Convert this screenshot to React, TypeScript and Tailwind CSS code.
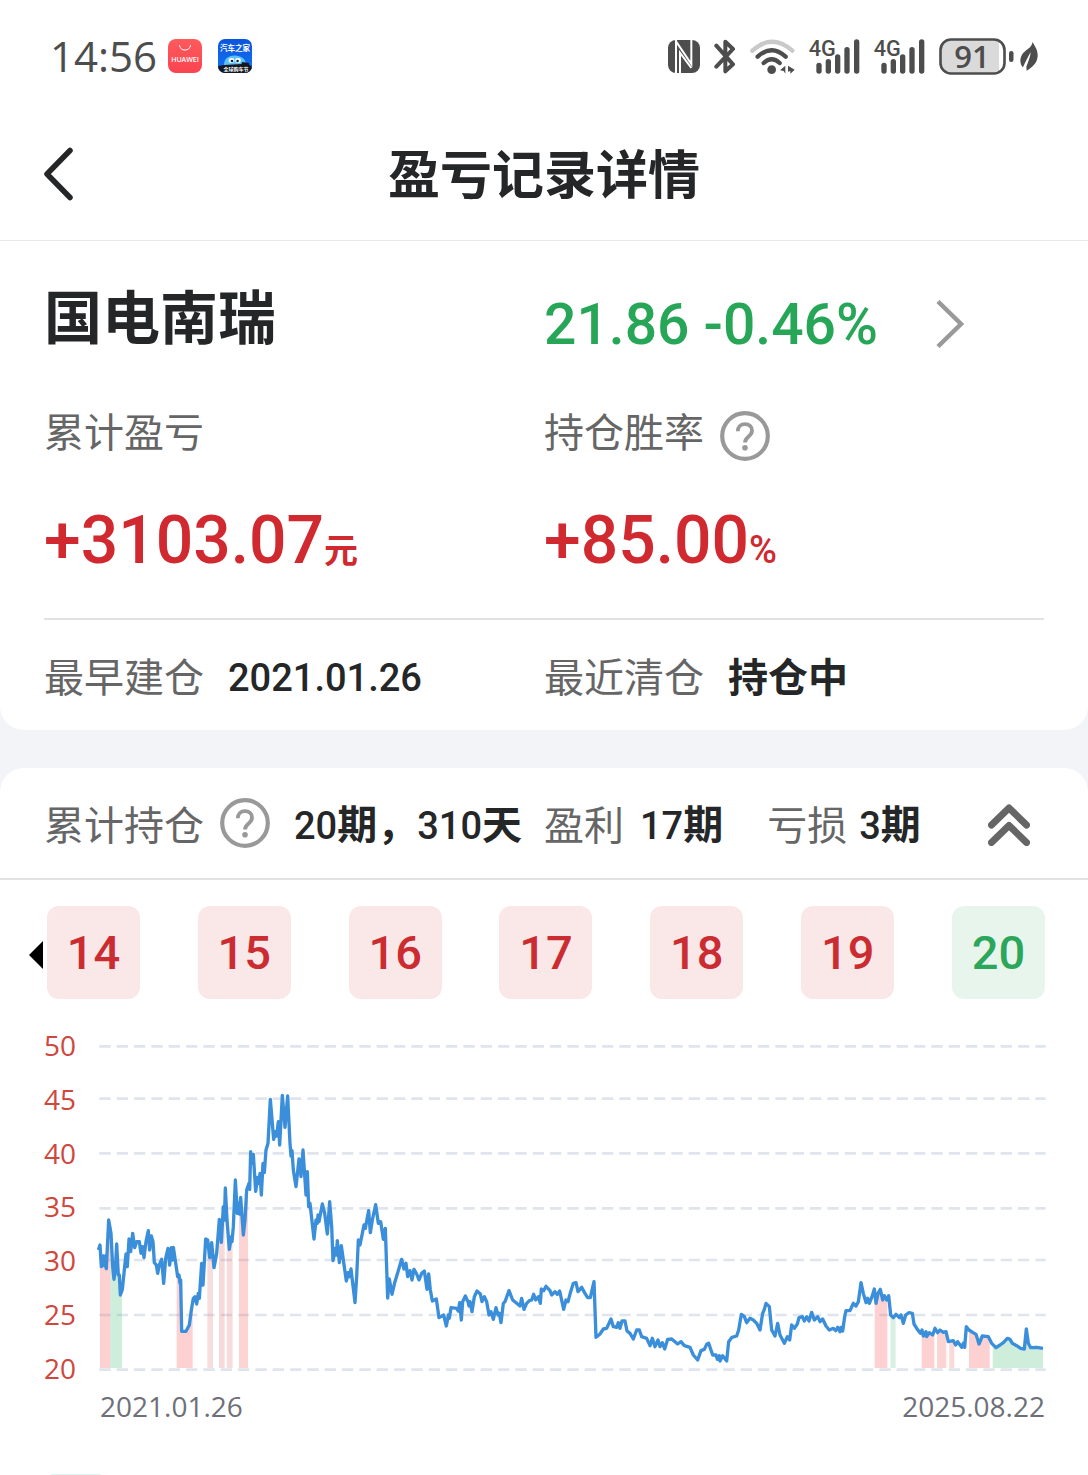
import React from "react";

const PRICE_LINE =
  "4,657 9,642 13,707 19,675 23,705 25,675 28,713 35,567 42,607 47,707 51,745 55,717 59,639 64,732 67,732 70,792 76,775 82,717 87,669 91,707 96,624 101,662 107,607 113,650 119,632 127,632 132,667 137,647 141,680 147,632 154,599 158,657 163,615 168,632 172,695 178,702 182,727 187,702 194,685 200,757 206,682 213,652 218,702 223,650 226,687 229,649 235,689 242,737 246,732 249,757 251,747 254,901 267,901 277,882 283,837 289,802 294,797 299,819 304,787 307,802 314,697 318,762 326,624 332,627 338,680 344,635 351,710 359,667 367,565 373,634 379,527 382,567 385,471 390,567 397,655 403,617 405,632 409,587 415,447 421,547 425,517 427,549 431,499 439,612 444,567 449,477 456,457 458,475 461,362 465,397 469,370 476,481 482,439 486,457 489,427 493,492 498,397 502,425 507,357 513,337 520,205 530,325 535,302 539,315 544,272 548,342 556,193 " +
  "564,289 572,195 579,337 582,375 585,359 589,417 597,467 606,384 612,437 618,357 627,492 631,422 635,527 639,517 651,624 657,567 661,577 663,552 666,572 676,519 683,547 691,609 698,512 704,587 708,689 715,652 718,672 721,629 727,695 733,644 739,687 748,750 753,725 757,737 762,714 774,815 779,737 784,627 789,642 795,612 801,582 805,592 815,539 820,605 826,567 836,521 844,577 851,572 859,625 865,592 872,801 877,744 885,790 893,755 903,722 914,685 921,714 927,697 932,737 939,719 945,747 951,715 959,729 966,747 974,727 982,720 990,775 995,729 1000,777 1006,810 1018,804 1026,860 1040,852 1048,885 1054,852 1057,862 1062,830 1079,832 1084,840 1088,815 1093,867 1097,812 1105,795 1113,812 1116,825 1119,812 1125,842 1132,797 1140,780 1150,789 1155,812 1162,797 1169,812 1176,852 1182,842 1189,865 1197,830 1203,852 1207,847 1212,875 " +
  "1219,817 1224,812 1236,779 1247,807 1259,817 1269,825 1274,802 1281,835 1289,817 1297,809 1304,807 1310,790 1316,807 1324,797 1330,817 1333,774 1340,779 1347,766 1359,779 1364,792 1374,782 1381,790 1388,780 1400,835 1407,807 1413,812 1421,782 1429,757 1437,755 1443,782 1454,769 1464,787 1472,800 1480,800 1491,752 1497,919 1509,909 1519,894 1529,892 1542,864 1549,887 1559,889 1564,875 1569,892 1575,870 1584,870 1590,900 1599,907 1609,924 1619,897 1627,897 1634,917 1649,922 1659,944 1666,922 1674,947 1683,927 1689,947 1696,935 1703,954 1712,925 1724,924 1742,939 1752,932 1762,944 1779,949 1789,972 1802,987 1812,959 1822,955 1829,940 1835,937 1847,972 1857,972 1861,985 1867,974 1869,990 1877,974 1889,990 1895,932 1905,919 1919,915 1925,897 1933,850 1942,857 1949,875 1959,862 1969,867 1979,877 1989,897 1997,847 2002,835 2007,817 2017,827 " +
  "2024,897 2034,915 2042,877 2049,912 2062,937 2071,917 2078,927 2084,882 2092,892 2101,879 2106,860 2116,857 2122,870 2129,857 2136,870 2144,844 2152,867 2162,857 2169,872 2177,864 2187,885 2197,897 2209,892 2216,899 2222,889 2229,902 2232,889 2237,900 2243,857 2247,839 2259,839 2269,817 2277,825 2284,812 2292,755 2299,787 2307,815 2312,802 2317,817 2325,797 2332,774 2337,817 2343,787 2350,775 2357,807 2362,794 2369,807 2375,794 2381,852 2389,860 2397,850 2407,860 2412,852 2419,877 2426,852 2436,845 2446,847 2451,879 2461,895 2471,907 2475,897 2479,915 2487,902 2489,917 2497,905 2507,912 2514,892 2522,905 2529,897 2539,904 2547,902 2554,932 2569,929 2576,942 2582,932 2594,949 2599,937 2603,949 2608,887 2616,897 2627,904 2637,910 2646,939 2656,915 2674,917 2684,937 2697,950 2709,942 2719,935 2731,922 2739,925 2746,937 2759,944 2771,952 2782,954 2788,894 2794,937 2801,950 2819,949 2838,952";

const GRID_LINES = [46, 203, 367, 532, 687, 852, 1016];

const BANDS = [
  { from: 9, to: 40, color: "#f87171", opacity: 0.32 },
  { from: 40, to: 75, color: "#4fbf7f", opacity: 0.28 },
  { from: 239, to: 287, color: "#f87171", opacity: 0.32 },
  { from: 331, to: 348, color: "#e08080", opacity: 0.26 },
  { from: 366, to: 383, color: "#e08080", opacity: 0.3 },
  { from: 389, to: 407, color: "#e08080", opacity: 0.28 },
  { from: 426, to: 453, color: "#f87171", opacity: 0.3 },
  { from: 2333, to: 2371, color: "#f87171", opacity: 0.32 },
  { from: 2380, to: 2396, color: "#4fbf7f", opacity: 0.22 },
  { from: 2474, to: 2512, color: "#f87171", opacity: 0.32 },
  { from: 2520, to: 2548, color: "#f87171", opacity: 0.3 },
  { from: 2557, to: 2572, color: "#e87878", opacity: 0.28 },
  { from: 2616, to: 2678, color: "#f87171", opacity: 0.32 },
  { from: 2687, to: 2838, color: "#4fbf7f", opacity: 0.28 },
];

const PERIODS = [
  { n: 14, profit: true },
  { n: 15, profit: true },
  { n: 16, profit: true },
  { n: 17, profit: true },
  { n: 18, profit: true },
  { n: 19, profit: true },
  { n: 20, profit: false },
];

function Num({ children }: { children: React.ReactNode }) {
  return <span className="font-[Roboto] text-[38px] font-medium">{children}</span>;
}

function HelpButton({ label }: { label: string }) {
  return (
    <button type="button" aria-label={label} className="shrink-0">
      <svg viewBox="0 0 50 50" className="size-[50px]" fill="none" stroke="#999999">
        <circle cx="25" cy="25" r="22.8" strokeWidth="4.2" />
        <path d="M17.8 20.3c0-4.4 3-7.2 7.2-7.2s7 2.700 7 6.500c0 3-1.500 4.400-3.600 6.100-2.300 1.800-3.400 2.900-3.400 5.800" strokeWidth="3.800" />
        <circle cx="25" cy="36.800" r="2.800" fill="#999999" stroke="none" />
      </svg>
    </button>
  );
}

function Signal() {
  return (
    <svg viewBox="0 0 153 105" className="h-[35px] w-[51px] overflow-visible" fill="#4d4d4d">
      <text x="-1" y="51" fontFamily="Roboto" fontWeight="500" fontSize="65">4G</text>
      <rect x="22" y="71" width="16" height="33" rx="8" />
      <rect x="50" y="60" width="16" height="44" rx="8" />
      <rect x="78" y="46" width="16" height="58" rx="8" />
      <rect x="106" y="24" width="16" height="80" rx="8" />
      <rect x="135" y="1" width="16" height="103" rx="8" />
    </svg>
  );
}

function StatusBar() {
  return (
    <div className="flex h-28 items-center justify-between px-[50px] text-[#4d4d4d]">
      <div className="flex items-center">
        <span className="font-['Open_Sans'] text-[42px] leading-none font-medium">14:56</span>
        <svg viewBox="0 0 34 34" className="ml-[11px] size-[34px]">
          <defs>
            <linearGradient id="store" x1="0" y1="0" x2="0" y2="1">
              <stop offset="0" stopColor="#fd5a5c" />
              <stop offset="1" stopColor="#fa4450" />
            </linearGradient>
          </defs>
          <rect width="34" height="34" rx="8" fill="url(#store)" />
          <path d="M11.500 6.500a5.600 5.600 0 0 0 11 0" fill="none" stroke="#fff" strokeWidth="1" strokeLinecap="round" />
          <text x="17" y="22.500" textAnchor="middle" fontFamily="Open Sans" fontWeight="600" fontSize="7" fill="#fff">HUAWEI</text>
        </svg>
        <svg viewBox="0 0 34 34" className="ml-4 size-[34px]">
          <defs>
            <clipPath id="autoClip"><rect width="34" height="34" rx="7" /></clipPath>
            <linearGradient id="auto" x1="0" y1="0" x2="0" y2="1">
              <stop offset="0" stopColor="#0a55dc" />
              <stop offset="1" stopColor="#1673f2" />
            </linearGradient>
          </defs>
          <g clipPath="url(#autoClip)">
            <rect width="34" height="34" fill="url(#auto)" />
            <path d="M6 26c0-6 4-9.500 10.500-9.500S28 20 28 26z" fill="#5cc3fa" />
            <ellipse cx="13.500" cy="21.500" rx="2.800" ry="2.400" fill="#fff" />
            <ellipse cx="20" cy="21.500" rx="2.800" ry="2.400" fill="#fff" />
            <circle cx="14" cy="22" r="1.300" fill="#112233" />
            <circle cx="19.600" cy="22" r="1.300" fill="#112233" />
            <path d="M0 27l6-1 18-1 8 1 2 2v6H0z" fill="#14171f" />
            <path d="M24 23l7 1v3h-8z" fill="#14171f" />
            <text x="17" y="11.500" textAnchor="middle" fontFamily="Noto Sans CJK SC" fontWeight="700" fontSize="7.500" fill="#fff">汽车之家</text>
            <text x="18" y="32" textAnchor="middle" fontFamily="Noto Sans CJK SC" fontWeight="700" fontSize="5" fill="#fff">全球购车节</text>
          </g>
        </svg>
      </div>
      <div className="flex items-center">
        <svg viewBox="0 0 96 99" className="h-[33px] w-8">
          <rect width="96" height="99" rx="24" fill="#4d4d4d" />
          <path d="M24 0V99M24 4L70 72V0M36 99V38L70 84" fill="none" stroke="#fff" strokeWidth="6" />
        </svg>
        <svg viewBox="0 0 66 105" className="ml-[14px] h-[35px] w-[22px]" fill="none" stroke="#4d4d4d" strokeWidth="12" strokeLinecap="round" strokeLinejoin="round">
          <path d="M7 20L57 76 34 97V8L57 30 7 83" />
        </svg>
        <svg viewBox="0 0 135 105" className="ml-[14px] h-[35px] w-[45px]" fill="none" strokeWidth="13" strokeLinecap="round">
          <path d="M7 35Q65-18 127 35" stroke="#c9c9c9" />
          <path d="M23 53Q65 14 107 53" stroke="#4d4d4d" />
          <path d="M41 72Q65 50 89 72" stroke="#4d4d4d" />
          <circle cx="65" cy="92" r="13" fill="#4d4d4d" />
          <path d="M90 94L106 80V104L101 96zM114 80L134 92 121 104V96L114 98z" fill="#4d4d4d" />
        </svg>
        <div className="ml-[14px]"><Signal /></div>
        <div className="ml-[14px]"><Signal /></div>
        <svg viewBox="0 0 76 37" className="ml-[14px] h-[37px] w-[76px] overflow-visible">
          <path d="M12 1.500h48V35.500H12a10.500 10.500 0 0 1-10.500-10.500v-13A10.500 10.500 0 0 1 12 1.500z" fill="#dadada" />
          <rect x="1.500" y="1.500" width="64" height="34" rx="10.500" fill="none" stroke="#4d4d4d" strokeWidth="2.600" />
          <rect x="70" y="13" width="4.500" height="11" rx="2.200" fill="#4d4d4d" />
          <text x="33" y="29.500" textAnchor="middle" fontFamily="Open Sans" fontWeight="600" fontSize="31" fill="#4d4d4d">91</text>
        </svg>
        <svg viewBox="0 0 54 87" className="ml-[5px] h-[29px] w-[18px]">
          <path d="M38 0C44 12 54 24 53 42 52 64 36 76 20 86L19 74C24 60 31 46 32 30 24 46 16 58 9 76-1 66-1 50 6 38 14 24 34 20 38 0z" fill="#4d4d4d" />
        </svg>
      </div>
    </div>
  );
}

function Chart() {
  return (
    <figure className="mt-8 pr-[41px] pl-11 font-['Open_Sans'] text-[28px] leading-7">
      <div className="flex">
        <div className="flex w-[53px] shrink-0 flex-col justify-between text-[#d0473e]">
          {[50, 45, 40, 35, 30, 25, 20].map((v) => (
            <span key={v}>{v}</span>
          ))}
        </div>
        <svg viewBox="0 0 2850 1053" className="min-w-0 flex-1" role="img" aria-label="股价走势">
          <defs>
            <clipPath id="underLine">
              <polygon points={`4,1011 ${PRICE_LINE} 2838,1011`} />
            </clipPath>
          </defs>
          {GRID_LINES.map((y) => (
            <path key={y} d={`M7 ${y}H2846`} stroke="#e0e4ed" strokeWidth="8" strokeDasharray="34 18" />
          ))}
          <g clipPath="url(#underLine)">
            {BANDS.map((b) => (
              <rect key={b.from} x={b.from} y="0" width={b.to - b.from} height="1011" fill={b.color} fillOpacity={b.opacity} />
            ))}
          </g>
          <polyline points={PRICE_LINE} fill="none" stroke="#3b8fda" strokeWidth="10" strokeLinejoin="round" />
        </svg>
      </div>
      <figcaption className="mt-[10px] flex justify-between pr-0.5 pl-14 text-[#6e7079]">
        <span>2021.01.26</span>
        <span>2025.08.22</span>
      </figcaption>
    </figure>
  );
}

export default function App() {
  return (
    <div className="bg-[#f3f4f7] font-['Noto_Sans_CJK_SC',sans-serif] text-[#242628]">
      <div className="bg-white">
        <StatusBar />
        <header className="grid h-[129px] grid-cols-[1fr_auto_1fr] items-center border-b border-[#e8e8e8] px-[43px] pb-1">
          <button type="button" aria-label="返回" className="justify-self-start">
            <svg viewBox="0 0 31 54" className="h-[54px] w-[31px]" fill="none" stroke="#242628" strokeWidth="5.500" strokeLinecap="round" strokeLinejoin="round">
              <path d="M27 3.500L4 27 27 50.500" />
            </svg>
          </button>
          <h1 className="pb-1 text-[52px] leading-none font-bold">盈亏记录详情</h1>
        </header>
      </div>

      <section className="rounded-b-3xl bg-white px-11 pt-9">
        <div className="grid h-[90px] grid-cols-2 items-center">
          <h2 className="pb-4 text-[58px] leading-none font-bold">国电南瑞</h2>
          <a href="#quote" className="flex items-center justify-between pt-1 pr-[79px] font-[Roboto] text-[57px] leading-none font-medium text-[#27a657]">
            <span className="whitespace-nowrap">21.86 -0.46%</span>
            <svg viewBox="0 0 30 50" className="h-[50px] w-[30px]" fill="none" stroke="#999999" strokeWidth="4.500">
              <path d="M3 2.500L26 25 3 47.500" />
            </svg>
          </a>
        </div>

        <dl className="grid grid-cols-2">
          <div>
            <dt className="mt-10 flex h-[54px] items-center text-[40px] leading-none text-[#666666]">
              <span className="pb-2">累计盈亏</span>
            </dt>
            <dd className="mt-10 h-20 font-[Roboto] text-[66px] leading-[80px] font-medium whitespace-nowrap text-[#d0292f]">
              +3103.07
              <span className="font-['Noto_Sans_CJK_SC'] text-[34px] leading-none font-bold">元</span>
            </dd>
          </div>
          <div>
            <dt className="mt-10 flex h-[54px] items-center gap-4 text-[40px] leading-none text-[#666666]">
              <span className="pb-2">持仓胜率</span>
              <span className="flex pt-1"><HelpButton label="持仓胜率说明" /></span>
            </dt>
            <dd className="mt-10 h-20 font-[Roboto] text-[66px] leading-[80px] font-medium whitespace-nowrap text-[#d0292f]">
              +85.00
              <span className="text-[38px] leading-none">%</span>
            </dd>
          </div>
        </dl>

        <dl className="mt-[37px] grid h-28 grid-cols-2 items-center border-t-2 border-[#e2e2e2] text-[40px] leading-none">
          <div className="flex items-center gap-6">
            <dt className="text-[#666666]">最早建仓</dt>
            <dd><Num>2021.01.26</Num></dd>
          </div>
          <div className="flex items-center gap-6">
            <dt className="text-[#666666]">最近清仓</dt>
            <dd className="font-bold">持仓中</dd>
          </div>
        </dl>
      </section>

      <section className="mt-[38px] rounded-t-3xl bg-white">
        <div className="grid h-28 grid-cols-2 items-center border-b-2 border-[#e2e2e2] px-11 text-[40px] leading-none whitespace-nowrap">
          <div className="flex items-center">
            <span className="text-[#666666]">累计持仓</span>
            <span className="ml-4 flex"><HelpButton label="累计持仓说明" /></span>
            <span className="ml-6 font-bold"><Num>20</Num>期，<Num>310</Num>天</span>
          </div>
          <div className="flex items-center pr-[14px]">
            <span className="text-[#666666]">盈利</span>
            <span className="ml-4 font-bold"><Num>17</Num>期</span>
            <span className="ml-11 text-[#666666]">亏损</span>
            <span className="ml-3 font-bold"><Num>3</Num>期</span>
            <button type="button" aria-label="收起" className="ml-auto pt-1">
              <svg viewBox="0 0 42 42" className="size-[42px]" fill="none" stroke="#666666" strokeWidth="7" strokeLinecap="round" strokeLinejoin="round">
                <path d="M3.500 21L21 4 38.500 21M3.500 38.500L21 21.500 38.500 38.500" />
              </svg>
            </button>
          </div>
        </div>

        <nav aria-label="持仓期数" className="mt-[26px] flex items-center gap-1 pr-[43px] pl-[29px]">
          <button type="button" aria-label="更早的期数" className="pt-1">
            <svg viewBox="0 0 14 28" className="h-7 w-[14px]">
              <path d="M14 0V28L0 14z" fill="#000" />
            </svg>
          </button>
          <div className="flex flex-1 justify-between">
            {PERIODS.map((p) => (
              <button
                key={p.n}
                type="button"
                className={
                  p.profit
                    ? "size-[93px] rounded-xl bg-[#fae8e8] font-[Roboto] text-[47px] leading-none font-medium text-[#cb2c32]"
                    : "size-[93px] rounded-xl bg-[#e8f5ec] font-[Roboto] text-[47px] leading-none font-medium text-[#2ba65a]"
                }
              >
                {p.n}
              </button>
            ))}
          </div>
        </nav>

        <Chart />

        <div className="mt-[54px] ml-[51px] h-px w-[50px] bg-[#d9f7ee]" />
      </section>
    </div>
  );
}
